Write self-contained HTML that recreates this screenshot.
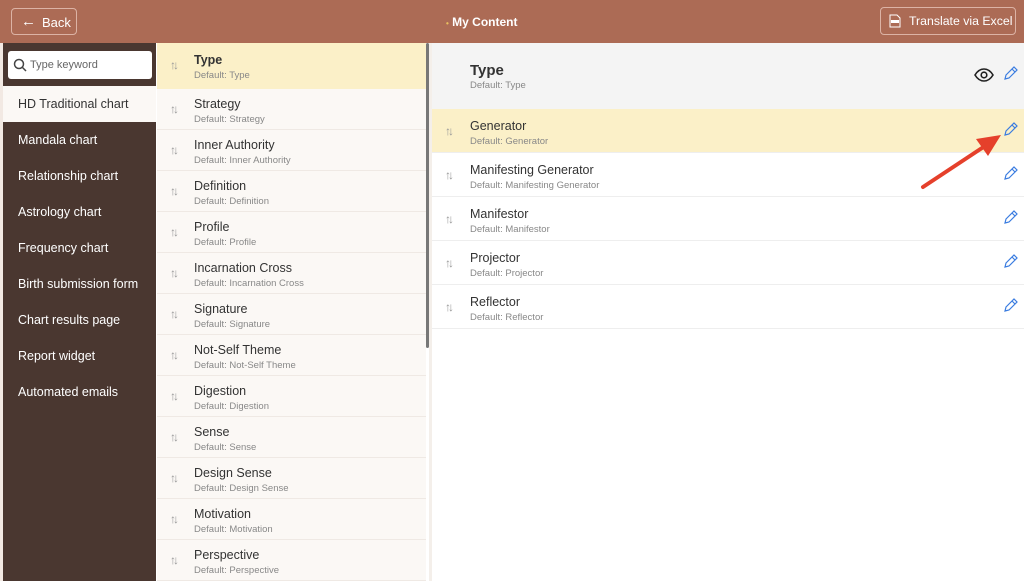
<!DOCTYPE html><html><head><style>
*{margin:0;padding:0;box-sizing:border-box}
body{width:1024px;height:581px;overflow:hidden;font-family:"Liberation Sans",sans-serif;background:#fff;position:relative}
.hdr{position:absolute;left:0;top:0;width:1024px;height:43px;background:#ac6b55}
.btn{position:absolute;border:1px solid #dcb3a5;border-radius:4px;color:#fff;font-size:13px;white-space:nowrap}
.side{position:absolute;left:3px;top:43px;width:153px;height:538px;background:#4a3730}
.side .it{height:36px;line-height:36px;padding-left:15px;color:#fff;font-size:12.5px}
.side .act{background:#fbf8f5;color:#333}
.mid{position:absolute;left:157px;top:43px;width:269px;height:538px;background:#fbf8f5}
.row{position:relative;height:41px;border-bottom:1px solid #efe9e4}
.row .t{position:absolute;left:37px;top:8px;font-size:12.5px;color:#333}
.row .d{position:absolute;left:37px;top:25px;font-size:9.5px;color:#888}
.ar{position:absolute;left:13px;top:13px;font-size:12px;color:#999;letter-spacing:-3px}
.right{position:absolute;left:432px;top:43px;width:592px;height:538px;background:#fff}
.rr{position:relative;height:44px;border-bottom:1px solid #eee}
.rr .t{position:absolute;left:38px;top:10px;font-size:12.5px;color:#333}
.rr .d{position:absolute;left:38px;top:27px;font-size:9.5px;color:#888}
.rr .ar{top:15px}
.pen{position:absolute;right:6px;top:13px}
</style></head><body>
<div class="hdr">
<div class="btn" style="left:11px;top:8px;width:66px;height:27px"><span style="position:absolute;left:9px;top:4px;font-size:15px">←</span><span style="position:absolute;left:30px;top:6px">Back</span></div>
<div style="position:absolute;left:446px;top:15px;color:#fff;font-size:12px;font-weight:bold"><span style="color:#e8c060;font-size:8px">•</span> My Content</div>
<div class="btn" style="left:880px;top:7px;width:136px;height:28px"><svg style="position:absolute;left:8px;top:6px" width="12" height="14" viewBox="0 0 12 14"><path d="M1 1h7l3 3v9H1z" fill="none" stroke="#fff" stroke-width="1"/><rect x="2" y="6" width="8" height="3" fill="#fff"/></svg><span style="position:absolute;left:28px;top:6px;font-size:12.3px">Translate via Excel</span></div>
</div>
<div style="position:absolute;left:0;top:43px;width:3px;height:538px;background:#f2e9e3"></div>
<div class="side">
<div style="height:43px;padding:8px 4px 0 5px"><div style="background:#fff;border-radius:3px;height:28px;position:relative"><svg style="position:absolute;left:5px;top:7px" width="14" height="14"><circle cx="6" cy="6" r="4.5" fill="none" stroke="#444" stroke-width="1.5"/><path d="M9.5 9.5l3.5 3.5" stroke="#444" stroke-width="1.5"/></svg><span style="position:absolute;left:22px;top:8px;font-size:11px;color:#666">Type keyword</span></div></div>
<div class="it act">HD Traditional chart</div><div class="it">Mandala chart</div><div class="it">Relationship chart</div><div class="it">Astrology chart</div><div class="it">Frequency chart</div><div class="it">Birth submission form</div><div class="it">Chart results page</div><div class="it">Report widget</div><div class="it">Automated emails</div>
</div>
<div class="mid">
<div class="row" style="height:46px;background:#fbf0c8;border:none"><span class="ar" style="top:15px">↑↓</span><div class="t" style="top:10px;font-weight:bold">Type</div><div class="d" style="top:27px">Default: Type</div></div>
<div class="row"><span class="ar">↑↓</span><div class="t">Strategy</div><div class="d">Default: Strategy</div></div>
<div class="row"><span class="ar">↑↓</span><div class="t">Inner Authority</div><div class="d">Default: Inner Authority</div></div>
<div class="row"><span class="ar">↑↓</span><div class="t">Definition</div><div class="d">Default: Definition</div></div>
<div class="row"><span class="ar">↑↓</span><div class="t">Profile</div><div class="d">Default: Profile</div></div>
<div class="row"><span class="ar">↑↓</span><div class="t">Incarnation Cross</div><div class="d">Default: Incarnation Cross</div></div>
<div class="row"><span class="ar">↑↓</span><div class="t">Signature</div><div class="d">Default: Signature</div></div>
<div class="row"><span class="ar">↑↓</span><div class="t">Not-Self Theme</div><div class="d">Default: Not-Self Theme</div></div>
<div class="row"><span class="ar">↑↓</span><div class="t">Digestion</div><div class="d">Default: Digestion</div></div>
<div class="row"><span class="ar">↑↓</span><div class="t">Sense</div><div class="d">Default: Sense</div></div>
<div class="row"><span class="ar">↑↓</span><div class="t">Design Sense</div><div class="d">Default: Design Sense</div></div>
<div class="row"><span class="ar">↑↓</span><div class="t">Motivation</div><div class="d">Default: Motivation</div></div>
<div class="row"><span class="ar">↑↓</span><div class="t">Perspective</div><div class="d">Default: Perspective</div></div>
</div>
<div style="position:absolute;left:426px;top:43px;width:3px;height:305px;background:#777;border-radius:2px"></div>
<div style="position:absolute;left:429px;top:43px;width:3px;height:538px;background:#f4efea"></div>
<div class="right">
<div style="position:relative;height:66px;background:#f4f4f4"><div style="position:absolute;left:38px;top:19px;font-size:15px;font-weight:bold;color:#333">Type</div><div style="position:absolute;left:38px;top:37px;font-size:9.5px;color:#888">Default: Type</div>
<svg style="position:absolute;left:542px;top:25px" width="20" height="14" viewBox="0 0 20 14"><path d="M1 7C4 2 7 1 10 1s6 1 9 6c-3 5-6 6-9 6S4 12 1 7z" fill="none" stroke="#222" stroke-width="1.6"/><circle cx="10" cy="7" r="2.8" fill="none" stroke="#222" stroke-width="1.6"/></svg>
<svg style="position:absolute;left:571px;top:23px" width="15" height="15" viewBox="0 0 15 15"><path d="M2 13l1-4 8-8 3 3-8 8z M9 3l3 3" fill="none" stroke="#3a7ce0" stroke-width="1.2"/></svg></div>
<div class="rr" style="background:#fbf0c8"><span class="ar">↑↓</span><div class="t">Generator</div><div class="d">Default: Generator</div><svg class="pen" width="15" height="15" viewBox="0 0 15 15"><path d="M2 13l1-4 8-8 3 3-8 8z M9 3l3 3" fill="none" stroke="#3a7ce0" stroke-width="1.2"/></svg></div>
<div class="rr"><span class="ar">↑↓</span><div class="t">Manifesting Generator</div><div class="d">Default: Manifesting Generator</div><svg class="pen" width="15" height="15" viewBox="0 0 15 15"><path d="M2 13l1-4 8-8 3 3-8 8z M9 3l3 3" fill="none" stroke="#3a7ce0" stroke-width="1.2"/></svg></div>
<div class="rr"><span class="ar">↑↓</span><div class="t">Manifestor</div><div class="d">Default: Manifestor</div><svg class="pen" width="15" height="15" viewBox="0 0 15 15"><path d="M2 13l1-4 8-8 3 3-8 8z M9 3l3 3" fill="none" stroke="#3a7ce0" stroke-width="1.2"/></svg></div>
<div class="rr"><span class="ar">↑↓</span><div class="t">Projector</div><div class="d">Default: Projector</div><svg class="pen" width="15" height="15" viewBox="0 0 15 15"><path d="M2 13l1-4 8-8 3 3-8 8z M9 3l3 3" fill="none" stroke="#3a7ce0" stroke-width="1.2"/></svg></div>
<div class="rr"><span class="ar">↑↓</span><div class="t">Reflector</div><div class="d">Default: Reflector</div><svg class="pen" width="15" height="15" viewBox="0 0 15 15"><path d="M2 13l1-4 8-8 3 3-8 8z M9 3l3 3" fill="none" stroke="#3a7ce0" stroke-width="1.2"/></svg></div>
</div>
<svg style="position:absolute;left:0;top:0" width="1024" height="581"><path d="M923 187L985 146" stroke="#e5402b" stroke-width="4" stroke-linecap="round"/><path d="M1001 135L976 139L988 156z" fill="#e5402b"/></svg>
</body></html>
